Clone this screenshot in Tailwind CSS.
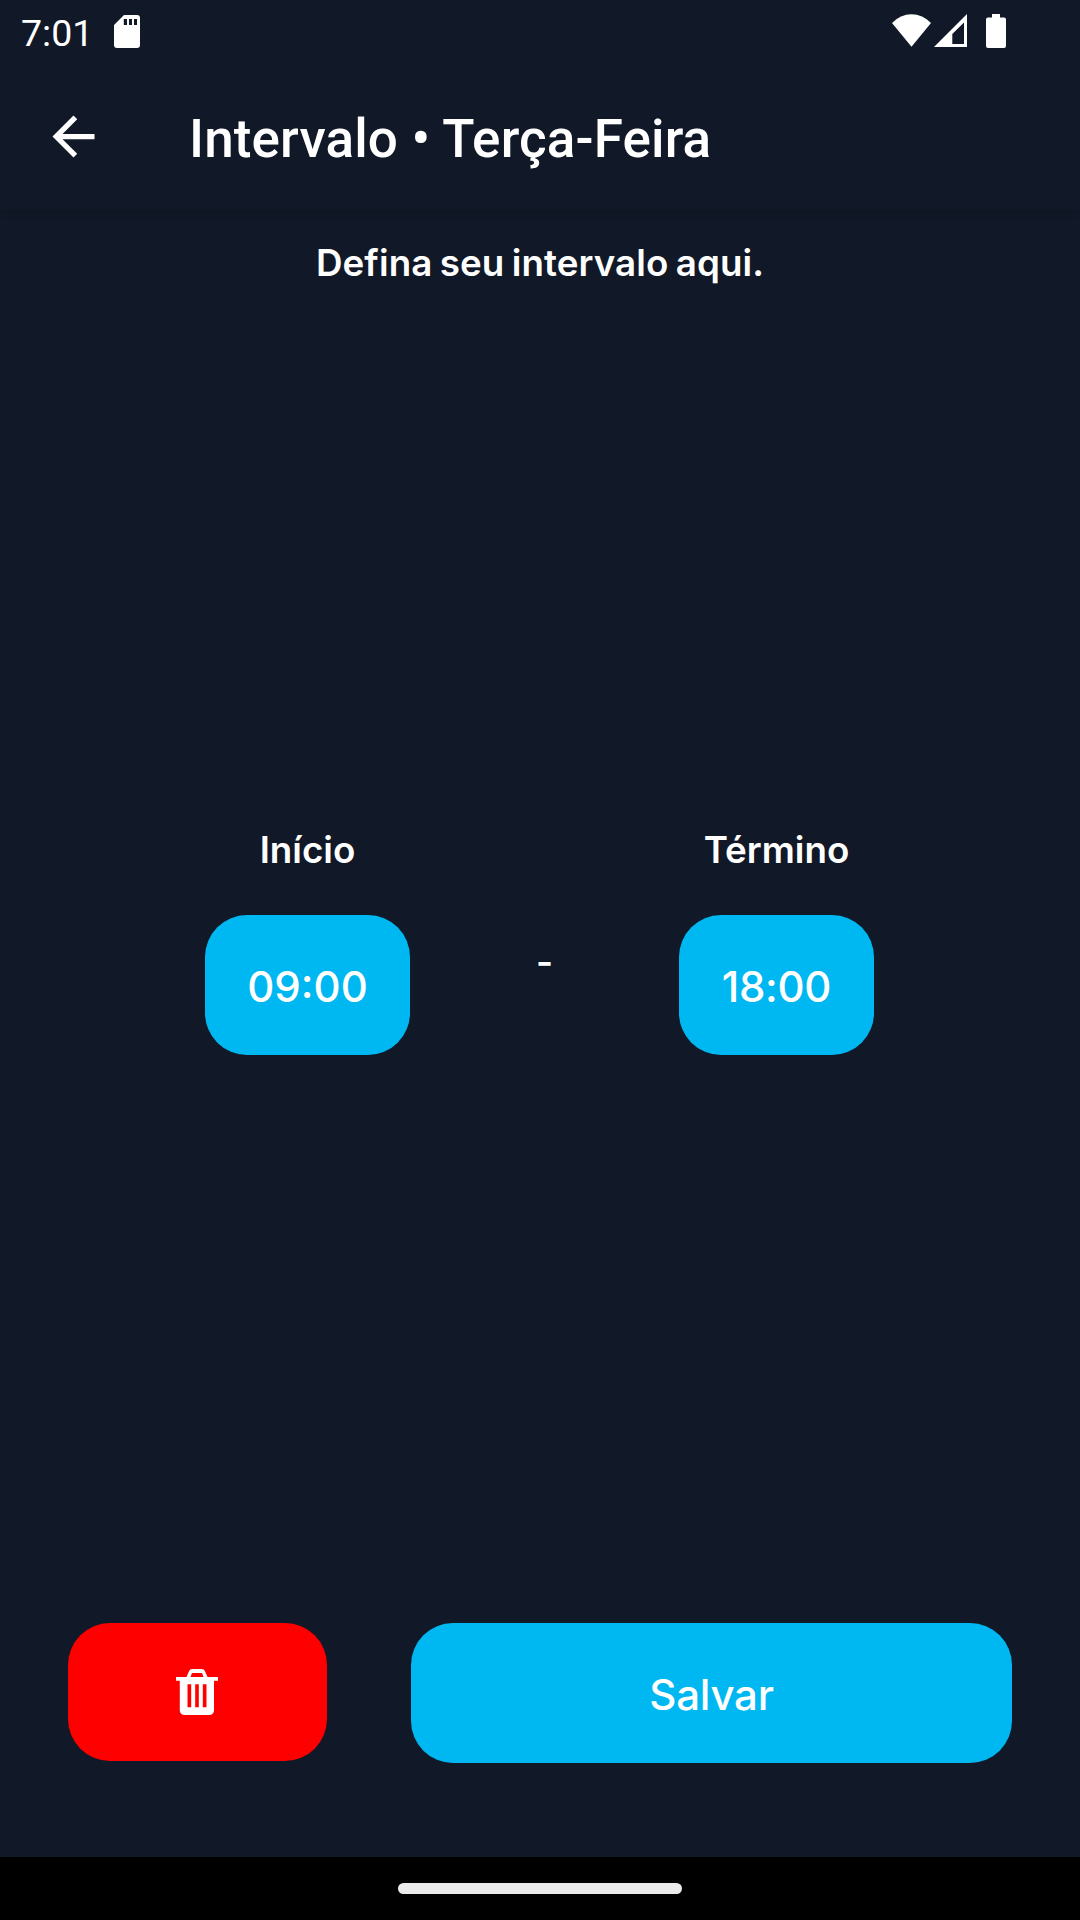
<!DOCTYPE html>
<html lang="pt-BR">
<head>
<meta charset="utf-8">
<title>Intervalo</title>
<script src="https://cdn.jsdelivr.net/npm/@tailwindcss/browser@4"></script>
</head>
<body class="bg-[#111827]">
<div class="flex h-[1920px] w-[1080px] flex-col overflow-hidden bg-[#111827] font-['Inter',sans-serif] text-white">

  <header class="h-[210px] shrink-0 shadow-[0_2px_8px_rgba(0,0,0,0.16)]">
    <div class="flex h-[63px] items-center justify-between pr-[74px] pl-[21px]">
      <div class="flex items-center">
        <span class="w-[93px] pt-[2px] font-['Roboto',sans-serif] text-[37.5px] leading-[40px]">7:01</span>
        <svg class="h-[33px] w-[26px]" viewBox="0 0 26 33"><path fill="#fff" fill-rule="evenodd" d="M10 0H23a3 3 0 0 1 3 3V30a3 3 0 0 1-3 3H3a3 3 0 0 1-3-3V10ZM9.8 4V10H13V4ZM15 4V10H18V4ZM20 4V10H23V4Z"/></svg>
      </div>
      <div class="flex items-center pb-px">
        <svg class="h-[34px] w-[39px]" viewBox="0 0 39 34"><path fill="#fff" d="M0 9Q8.500 .3 19.500 .3T39 9L19.500 32.800Z"/></svg>
        <svg class="ml-[3px] h-[34px] w-[33px]" viewBox="0 0 33 34"><path fill="#fff" fill-rule="evenodd" d="M33 0V33H0ZM30 8.500 18.300 20V30H30Z"/></svg>
        <svg class="ml-[19px] h-[34px] w-[20px]" viewBox="0 0 20 34"><path fill="#fff" d="M6 0H14V3.500H18a2 2 0 0 1 2 2V32a2 2 0 0 1-2 2H2a2 2 0 0 1-2-2V5.500a2 2 0 0 1 2-2H6Z"/></svg>
      </div>
    </div>
    <div class="flex h-[147px] items-center pl-[42px]">
      <svg class="h-[63px] w-[63px]" viewBox="0 0 24 24"><path fill="#fff" d="M20 11H7.830l5.590-5.590L12 4l-8 8 8 8 1.410-1.410L7.830 13H20v-2z"/></svg>
      <h1 class="pt-[5px] pl-[84px] font-['Roboto',sans-serif] text-[53px] leading-[62px] font-medium tracking-[0.14px] whitespace-nowrap">Intervalo • Terça-Feira</h1>
    </div>
  </header>

  <main class="flex flex-1 flex-col">
    <p class="pt-[28px] text-center text-[36.75px] leading-[50px] font-semibold tracking-[0.08px] [word-spacing:-2px]">Defina seu intervalo aqui.</p>

    <section class="mt-[537px] flex h-[230px] pl-[205px]">
      <div class="flex w-[205px] flex-col items-center">
        <span class="text-[36.75px] leading-[50px] font-semibold">Início</span>
        <button class="mt-[40px] h-[140px] w-full rounded-[42px] bg-[#00b8f1] pt-[3px] text-[42px] leading-[50px] font-medium">09:00</button>
      </div>
      <span class="flex w-[269px] items-center justify-center pt-[43px] text-[36.75px] leading-[50px] font-semibold">-</span>
      <div class="flex w-[195px] flex-col items-center">
        <span class="text-[36.75px] leading-[50px] font-semibold">Término</span>
        <button class="mt-[40px] h-[140px] w-full rounded-[42px] bg-[#00b8f1] pt-[3px] text-[42px] leading-[50px] font-medium tracking-[-0.3px]">18:00</button>
      </div>
    </section>

    <section class="mt-auto flex items-start gap-[84px] px-[68px] pb-[94px]">
      <button class="flex h-[138px] w-[259px] shrink-0 items-center justify-center rounded-[42px] bg-[#ff0000]" aria-label="Excluir">
        <svg class="mr-px h-[46px] w-[42px]" viewBox="0 0 42 46"><path fill="#fff" fill-rule="evenodd" d="M0 8H10.500L13 2.200Q14 0 16.200 0H25.800Q28 0 29 2.200L31.500 8H42V11.800H38V41.500a4.500 4.500 0 0 1-4.500 4.500H8.300a4.500 4.500 0 0 1-4.500-4.500V11.800H0ZM14.500 8H27.500L26.200 4.600Q26 4 25.300 4H16.700Q16 4 15.800 4.600ZM11.500 15.300V38.300H15.200V15.300ZM19.200 15.300V38.300H22.800V15.300ZM26.800 15.300V38.300H30.500V15.300Z"/></svg>
      </button>
      <button class="h-[140px] flex-1 rounded-[42px] bg-[#00b8f1] pt-[3px] text-[42px] leading-[50px] font-medium tracking-[-0.25px]">Salvar</button>
    </section>
  </main>

  <footer class="flex h-[63px] shrink-0 justify-center bg-black pt-[26px]">
    <div class="h-[11px] w-[284px] rounded-full bg-[#ebebeb]"></div>
  </footer>
</div>
</body>
</html>
